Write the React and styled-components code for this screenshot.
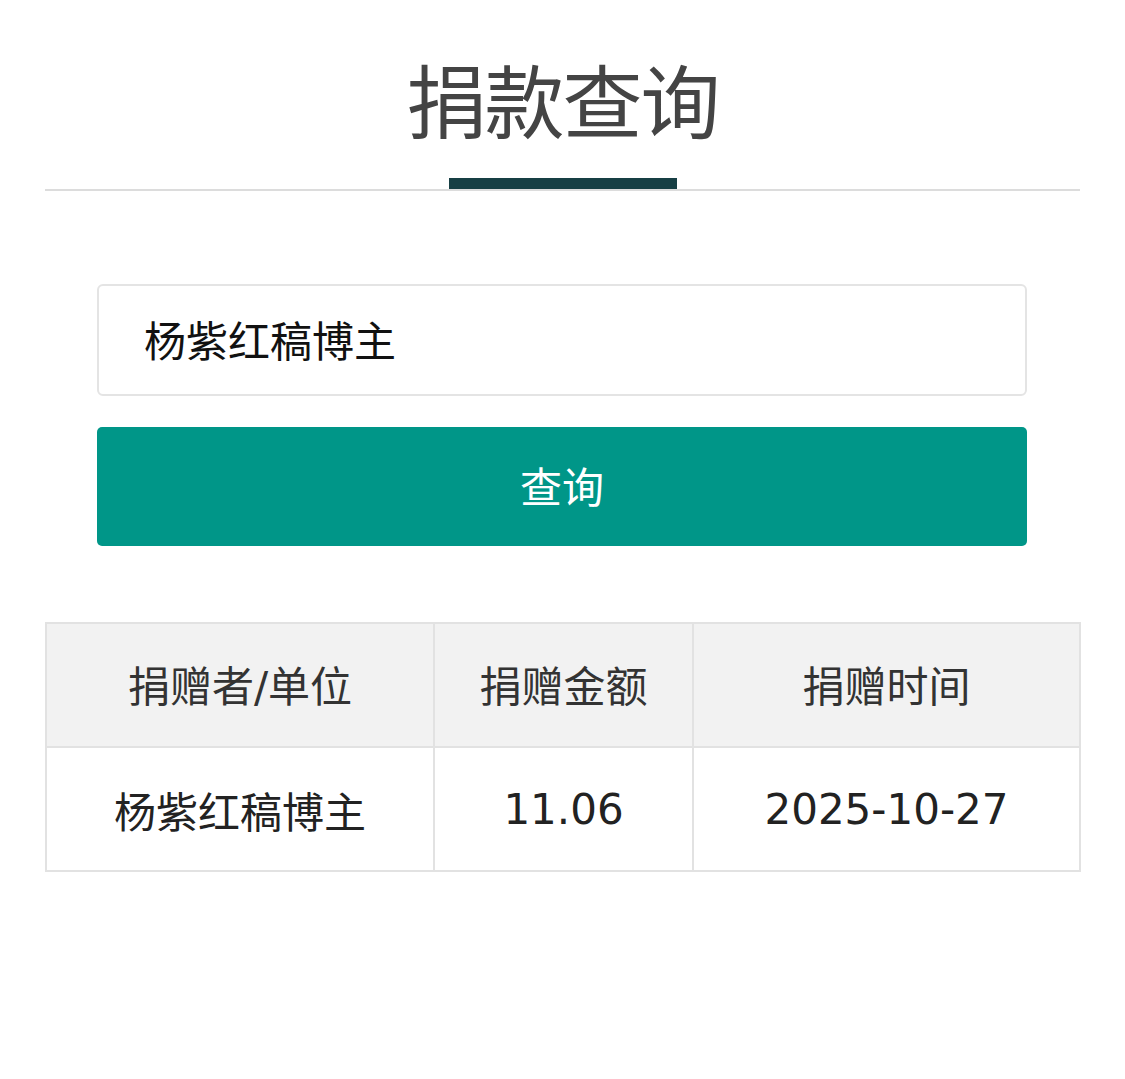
import React from "react";
import styled, { createGlobalStyle } from "styled-components";

const Global = createGlobalStyle`
  html, body { margin: 0; padding: 0; background: #ffffff; }
  body { font-family: "DejaVu Sans", "Noto Sans CJK SC", sans-serif; }
  * { box-sizing: border-box; }
`;

const Page = styled.div`
  padding: 0 45px;
  display: flex;
  flex-direction: column;
`;

const Header = styled.header`
  display: flex;
  flex-direction: column;
  align-items: center;
  padding-top: 65px;
  border-bottom: 2px solid #dcdcdc;
`;

const Title = styled.h1`
  margin: 0 0 33px;
  font-size: 80px;
  line-height: 80px;
  height: 80px;
  font-weight: 400;
  color: #444444;
  letter-spacing: -2px;
`;

const Bar = styled.div`
  width: 228px;
  height: 11px;
  background: #173f44;
`;

const Form = styled.form`
  margin: 93px 53px 0 52px;
  display: flex;
  flex-direction: column;
  gap: 31px;
`;

const Input = styled.input`
  height: 112px;
  border: 2px solid #e4e4e4;
  border-radius: 6px;
  padding: 0 0 4px 45px;
  font-family: inherit;
  font-size: 42px;
  color: #111111;
  outline: none;
  background: #fff;
`;

const Button = styled.button`
  height: 119px;
  border: none;
  border-radius: 5px;
  background: #009688;
  color: #ffffff;
  font-family: inherit;
  font-size: 42px;
  padding: 0 0 4px;
  cursor: pointer;
`;

const Table = styled.table`
  margin-top: 76px;
  width: 1034px;
  border-collapse: collapse;
  border: 2px solid #e2e2e2;
  table-layout: fixed;
`;

const Th = styled.th`
  height: 124px;
  background: #f2f2f2;
  border: 2px solid #e2e2e2;
  font-size: 42px;
  font-weight: 400;
  color: #333333;
  text-align: center;
  padding: 0 0 4px;
`;

const Td = styled.td`
  height: 124px;
  border: 2px solid #e2e2e2;
  font-size: 42px;
  color: #222222;
  text-align: center;
  padding: 0;
`;

export default function App() {
  return (
    <>
      <Global />
      <Page>
        <Header>
          <Title>捐款查询</Title>
          <Bar />
        </Header>
        <Form onSubmit={(e) => e.preventDefault()}>
          <Input defaultValue="杨紫红稿博主" />
          <Button type="submit">查询</Button>
        </Form>
        <Table>
          <colgroup>
            <col style={{ width: "388px" }} />
            <col style={{ width: "259px" }} />
            <col style={{ width: "387px" }} />
          </colgroup>
          <thead>
            <tr>
              <Th>捐赠者/单位</Th>
              <Th>捐赠金额</Th>
              <Th>捐赠时间</Th>
            </tr>
          </thead>
          <tbody>
            <tr>
              <Td>杨紫红稿博主</Td>
              <Td>11.06</Td>
              <Td>2025-10-27</Td>
            </tr>
          </tbody>
        </Table>
      </Page>
    </>
  );
}
